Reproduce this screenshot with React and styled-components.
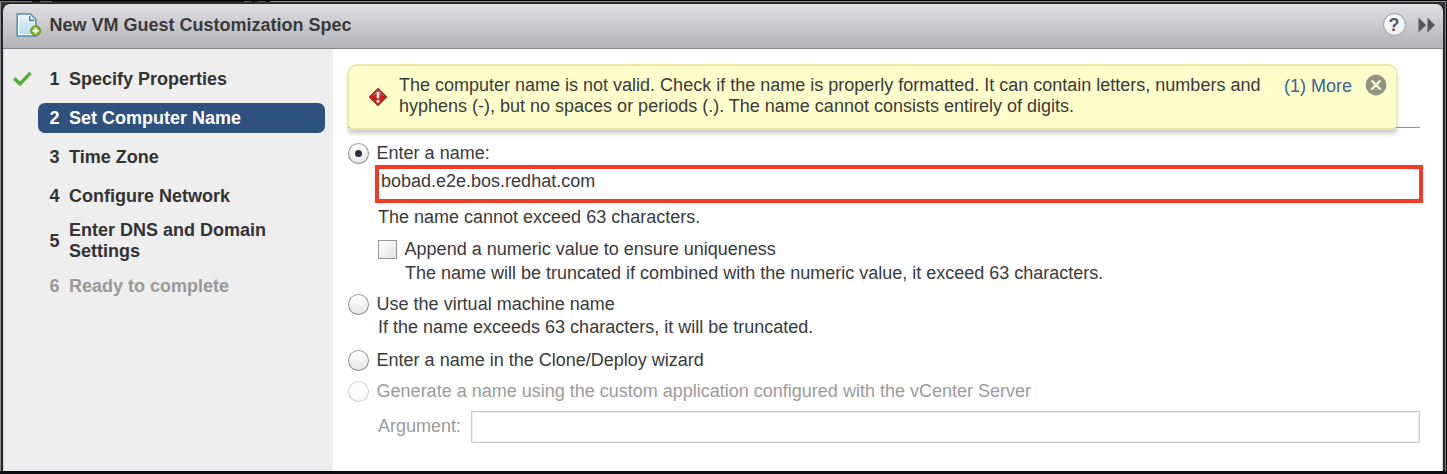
import React from 'react';
import styled, { createGlobalStyle } from 'styled-components';

const GlobalStyle = createGlobalStyle`
  *, *::before, *::after { box-sizing: border-box; }
  body { margin: 0; overflow: hidden; background: #0b0b0d; }
`;

const Backdrop = styled.div`
  display: flex;
  height: 474px;
  padding: 3px 3px 3px 1px;
  background:
    linear-gradient(#0b0b0d, #0b0b0d) 0 471px / 100% 3px no-repeat,
    linear-gradient(#050505, #050505) 0 0 / 100% 1px no-repeat,
    linear-gradient(90deg, #777 0 32px, #111 32px 40px, #3f7d2a 40px 52px, #111 52px 244px, #35609b 244px 251px, #111 251px 258px, #35609b 258px 265px, #111 265px 270px, #8d8a90 270px) 0 0 / 100% 2px no-repeat,
    linear-gradient(90deg, #8b8b8b 0 1px, #333 1px 1445px, #777 1445px 1446px, #0b0b0d 1446px);
  color: #3a3a3a;
  font: 18px/22px "Liberation Sans", Arial, sans-serif;
`;

const Window = styled.section`
  display: flex;
  flex-direction: column;
  flex: 1;
  border: solid #26262a;
  border-width: 1px 1px 0 2px;
  border-radius: 8px 8px 0 0;
  background: #26262a;
`;

const TitleBar = styled.header`
  display: flex;
  align-items: center;
  flex: none;
  height: 45px;
  padding: 0 8px 3px 13px;
  border-bottom: 1px solid #87878b;
  border-radius: 7px 7px 0 0;
  background: linear-gradient(#e0e0e4, #c9c9cd 50%, #b4b4b8);
`;

const Title = styled.h1`
  flex: 1;
  margin: 0 0 0 7.5px;
  font-size: 18px;
  line-height: 22px;
`;

const HelpButton = styled.button`
  width: 23px;
  height: 23px;
  margin-right: 12.5px;
  padding: 0;
  border: 1.5px solid #99999c;
  border-radius: 50%;
  background: #f3f3f3;
  color: #58585a;
  font: bold 18px/20px "Liberation Sans", Arial, sans-serif;
`;

const Body = styled.div`
  display: flex;
  flex: 1;
  background: #fff;
  border-right: 1px solid #d4d4d6;
`;

const Sidebar = styled.ol`
  display: flex;
  flex-direction: column;
  gap: 9px;
  width: 330px;
  margin: 0;
  padding: 15px 8px 0 9px;
  border-left: 1px solid #d2d2d2;
  background: #eee;
  list-style: none;
`;

const StepItem = styled.li`
  display: flex;
  align-items: center;
`;

const StepMark = styled.span`
  display: flex;
  width: 24.5px;
  flex: none;
`;

const StepLabel = styled.div`
  display: grid;
  grid-template-columns: 19.5px 1fr;
  align-items: center;
  flex: 1;
  min-height: 30px;
  padding: 0 50px 0 12px;
  border-radius: 7px;
  background: ${p => (p.$active ? '#2e527d' : 'transparent')};
  color: ${p => (p.$active ? '#fff' : p.$disabled ? '#999' : '#333')};
  font-weight: bold;
  line-height: ${p => (p.$wrapped ? '21px' : '20px')};
`;

const Main = styled.main`
  flex: 1;
  padding: 15px 22px 0 15px;
`;

const BannerArea = styled.div`
  position: relative;
  padding-right: 23px;
  &::before {
    content: '';
    position: absolute;
    right: 0;
    top: 63px;
    width: 100%;
    height: 1px;
    background: #96968f;
  }
`;

const Banner = styled.div`
  position: relative;
  display: flex;
  align-items: flex-start;
  height: 66px;
  padding: 0 9px 0 19px;
  border: 1px solid #ede5a6;
  border-width: 2px 1px;
  border-radius: 9px 9px 5px 5px;
  background: #ffffcc;
  box-shadow: 0 4px 4px rgba(0, 0, 0, 0.2);
  svg { flex: none; }
`;

const BannerText = styled.p`
  flex: 1;
  margin: 9px 0 0 11px;
  line-height: 21px;
  white-space: nowrap;
`;

const MoreLink = styled.a`
  margin: 9px 13px 0 0;
  color: #3a648f;
`;

const Option = styled.label`
  display: flex;
  align-items: center;
  gap: 7.6px;
  height: 22px;
  margin-top: ${p => p.$top || 0}px;
  color: ${p => (p.$disabled ? '#9b9b9b' : 'inherit')};
`;

const Radio = styled.span`
  display: flex;
  align-items: center;
  justify-content: center;
  width: 21px;
  height: 21px;
  border: 1.5px solid ${p => (p.$disabled ? '#cdcdcd' : '#8b8b8b')};
  border-top-color: ${p => (p.$disabled ? '#d6d6d6' : '#a5a5a5')};
  border-radius: 50%;
  background: linear-gradient(#fff, ${p => (p.$disabled ? '#f7f7f7' : '#e6e6e6')});
  &::after {
    content: '';
    width: 7px;
    height: 7px;
    border-radius: 50%;
    background: ${p => (p.$checked ? '#2c3138' : 'transparent')};
  }
`;

const Checkbox = styled.span`
  width: 19px;
  height: 19px;
  margin-top: 1px;
  border: 1px solid #959595;
  background: linear-gradient(135deg, #fff, #e4e4e4);
`;

const NameField = styled.div`
  height: 38px;
  margin: 1px -3px 0 27px;
  padding: 1px 2px;
  border: 4px solid #f23a24;
  background: #fff;
`;

const Hint = styled.p`
  margin: ${p => p.$top || 0}px 0 0 ${p => p.$indent}px;
`;

const Nested = styled.div`
  padding-left: 30px;
`;

const ArgumentRow = styled.div`
  display: flex;
  align-items: flex-start;
  justify-content: space-between;
  margin-top: 9px;
  padding-left: 30px;
  color: #9b9b9b;
  line-height: 30px;
`;

const ArgumentField = styled.div`
  width: 949px;
  height: 32px;
  border: 1px solid #cbcbcb;
  box-shadow: inset 0 0 0 1px #efefef;
  background: #fff;
`;

const SpecIcon = () => (
  <svg width="26" height="26" viewBox="0 0 26 26">
    <defs>
      <linearGradient id="page" x1="0" y1="0" x2="0" y2="1">
        <stop offset="0" stopColor="#e3f1f8" />
        <stop offset="1" stopColor="#b9dbee" />
      </linearGradient>
    </defs>
    <path d="M1.2 2h13.3l5.3 5.5V24H1.2z" fill="#fff" stroke="#4a8fb8" strokeWidth="1.5" />
    <path d="M3.2 4.2h8.3v6h6.3V22H3.2z" fill="url(#page)" />
    <path d="M13.7 4v4.4h4.6" fill="#fff" stroke="#3f7fa9" strokeWidth="1.6" />
    <circle cx="19.6" cy="18.8" r="5" fill="#83b52b" stroke="#5f9418" />
    <path d="M19.6 15.8v6M16.6 18.8h6" stroke="#fff" strokeWidth="2" />
  </svg>
);

const ForwardIcon = () => (
  <svg width="17" height="16" viewBox="0 0 17 16">
    <path d="M.5.5L8 8l-7.5 7.5zM9.5.5L17 8l-7.5 7.5z" fill="#58585b" />
  </svg>
);

const CheckIcon = () => (
  <svg width="20" height="16" viewBox="0 0 20 16">
    <path d="M1.2 7.4l5.8 5.4L17.5 1.8" fill="none" stroke="#50ad35" strokeWidth="3.4" />
  </svg>
);

const ErrorIcon = () => (
  <svg width="20" height="20" viewBox="0 0 20 20" style={{ marginTop: 21 }}>
    <path d="M10 1.2L18.8 10 10 18.8 1.2 10z" fill="#c8211c" stroke="#9d1916" strokeLinejoin="round" />
    <path d="M10 2.2L17 9.2Q10 7 3 9.2z" fill="#dc6059" opacity=".6" />
    <path d="M10 5v6.3" stroke="#fff" strokeWidth="2.6" />
    <circle cx="10" cy="14.2" r="1.5" fill="#fff" />
  </svg>
);

const CloseIcon = () => (
  <svg width="22" height="22" viewBox="0 0 22 22" style={{ marginTop: 7.5 }}>
    <circle cx="11" cy="11" r="10.4" fill="#929280" />
    <path d="M6.5 6.5l9 9M15.5 6.5l-9 9" stroke="#ffffdf" strokeWidth="2.4" />
  </svg>
);

const steps = [
  { label: 'Specify Properties', done: true },
  { label: 'Set Computer Name', active: true },
  { label: 'Time Zone' },
  { label: 'Configure Network' },
  { label: 'Enter DNS and Domain Settings', wrapped: true },
  { label: 'Ready to complete', disabled: true },
];

export default function App() {
  return (
    <Backdrop>
      <GlobalStyle />
      <Window>
        <TitleBar>
          <SpecIcon />
          <Title>New VM Guest Customization Spec</Title>
          <HelpButton>?</HelpButton>
          <ForwardIcon />
        </TitleBar>
        <Body>
          <Sidebar>
            {steps.map((step, i) => (
              <StepItem key={step.label}>
                <StepMark>{step.done && <CheckIcon />}</StepMark>
                <StepLabel $active={step.active} $disabled={step.disabled} $wrapped={step.wrapped}>
                  <span>{i + 1}</span>
                  <span>{step.label}</span>
                </StepLabel>
              </StepItem>
            ))}
          </Sidebar>
          <Main>
            <BannerArea>
              <Banner>
                <ErrorIcon />
                <BannerText>
                  The computer name is not valid. Check if the name is properly formatted. It can contain letters, numbers and
                  <br />
                  hyphens (-), but no spaces or periods (.). The name cannot consists entirely of digits.
                </BannerText>
                <MoreLink>(1) More</MoreLink>
                <CloseIcon />
              </Banner>
            </BannerArea>
            <Option $top={12}><Radio $checked />Enter a name:</Option>
            <NameField>bobad.e2e.bos.redhat.com</NameField>
            <Hint $top={3} $indent={30}>The name cannot exceed 63 characters.</Hint>
            <Nested>
              <Option $top={10}><Checkbox />Append a numeric value to ensure uniqueness</Option>
              <Hint $top={2} $indent={27}>The name will be truncated if combined with the numeric value, it exceed 63 characters.</Hint>
            </Nested>
            <Option $top={9}><Radio />Use the virtual machine name</Option>
            <Hint $top={1} $indent={30}>If the name exceeds 63 characters, it will be truncated.</Hint>
            <Option $top={11}><Radio />Enter a name in the Clone/Deploy wizard</Option>
            <Option $top={9} $disabled><Radio $disabled />Generate a name using the custom application configured with the vCenter Server</Option>
            <ArgumentRow>
              Argument:
              <ArgumentField />
            </ArgumentRow>
          </Main>
        </Body>
      </Window>
    </Backdrop>
  );
}
